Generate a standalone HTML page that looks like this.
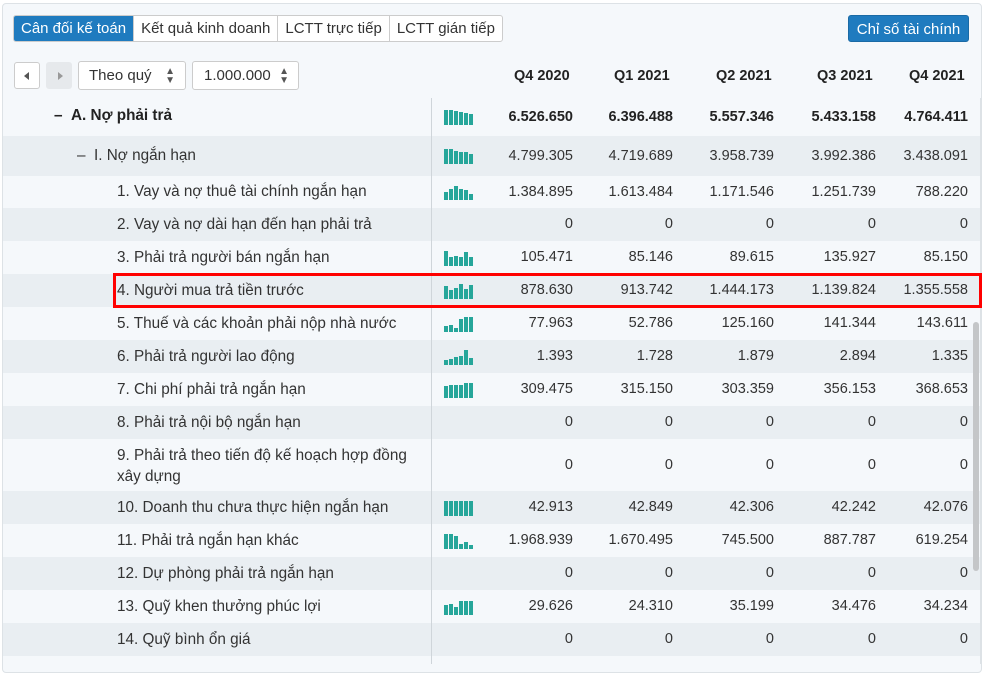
<!DOCTYPE html>
<html><head><meta charset="utf-8"><style>
*{box-sizing:border-box;margin:0;padding:0}
body{width:986px;height:664px;overflow:hidden;background:#fff;font-family:"Liberation Sans",Arial,sans-serif;font-size:14.5px;color:#333;position:relative}
.wrap{position:absolute;left:2px;top:3px;width:980px;height:670px;border:1px solid #dde2e6;border-radius:4px;background:#f5f8fb}
.tabs{position:absolute;left:13px;top:15px;display:flex;height:27px;border:1px solid #ccc;border-radius:3px;overflow:hidden;background:#fff}
.tabs div{padding:0 7px;line-height:25px;border-left:1px solid #ccc;color:#333;font-size:15px}
.tabs div:first-child{border-left:none;background:#1f7bbf;color:#fff}
.cs{position:absolute;left:848px;top:15px;width:121px;height:27px;background:#1f7bbf;color:#fff;border-radius:3px;line-height:27px;text-align:center;font-size:15px;border:1px solid #1a6aa5}
.btn{position:absolute;top:61px;height:29px;border:1px solid #ccc;border-radius:3px;background:#fff;font-size:15px;line-height:27px}
.tri{position:absolute;top:11px;width:0;height:0;border-top:4px solid transparent;border-bottom:4px solid transparent}
.hdr{position:absolute;top:68px;font-weight:bold;font-size:14.5px;color:#222}
.row{position:absolute;left:3px;width:977px}
.row .l{position:absolute;white-space:nowrap;font-size:15.3px;margin-left:-3px}
.row .n{position:absolute;text-align:right;width:100px;margin-left:-3px}
.vl{position:absolute;left:431px;top:98px;width:1px;height:566px;background:#cfd5da}
svg{position:absolute;left:441px}
</style></head><body>
<div class="wrap"></div>
<div class="tabs"><div>Cân đối kế toán</div><div>Kết quả kinh doanh</div><div>LCTT trực tiếp</div><div>LCTT gián tiếp</div></div>
<div class="cs">Chỉ số tài chính</div>
<div class="btn" style="left:14px;width:26px;height:27px;top:62px"><div class="tri" style="left:9px;top:9px;border-right:5px solid #555"></div></div>
<div class="btn" style="left:46px;width:26px;height:27px;top:62px;background:#e6e9ec;border-color:#e6e9ec"><div class="tri" style="left:11px;top:9px;border-left:5px solid #999"></div></div>
<div class="btn" style="left:78px;width:108px;padding-left:10px">Theo quý<span style="position:absolute;right:10px;top:0;font-size:10px;line-height:9px;padding-top:5px;color:#555">▲<br>▼</span></div>
<div class="btn" style="left:192px;width:107px;padding-left:11px">1.000.000<span style="position:absolute;right:9px;top:0;font-size:10px;line-height:9px;padding-top:5px;color:#555">▲<br>▼</span></div>
<div class="hdr" style="left:514px">Q4 2020</div>
<div class="hdr" style="left:614px">Q1 2021</div>
<div class="hdr" style="left:716px">Q2 2021</div>
<div class="hdr" style="left:817px">Q3 2021</div>
<div class="hdr" style="left:909px">Q4 2021</div>

<div class="row" style="top:98px;height:38px;background:#f5f8fb;font-weight:bold;color:#222"><span class="l" style="left:54px;top:9px">–&nbsp;&nbsp;A. Nợ phải trả</span>
<svg style="top:12px" width="29" height="15"><g fill="#26a69a"><rect x="0" y="0" width="4" height="15"/><rect x="5" y="0" width="4" height="15"/><rect x="10" y="1" width="4" height="14"/><rect x="15" y="2" width="4" height="13"/><rect x="20" y="3" width="4" height="12"/><rect x="25" y="4" width="4" height="11"/></g></svg>
<span class="n" style="left:473px;top:11px">6.526.650</span><span class="n" style="left:573px;top:11px">6.396.488</span><span class="n" style="left:674px;top:11px">5.557.346</span><span class="n" style="left:776px;top:11px">5.433.158</span><span class="n" style="left:868px;top:11px">4.764.411</span></div>

<div class="row" style="top:136px;height:40px;background:#e9eef2"><span class="l" style="left:77px;top:11px">–&nbsp;&nbsp;I. Nợ ngắn hạn</span>
<svg style="top:13px" width="29" height="15"><g fill="#26a69a"><rect x="0" y="0" width="4" height="15"/><rect x="5" y="0" width="4" height="15"/><rect x="10" y="2" width="4" height="13"/><rect x="15" y="3" width="4" height="12"/><rect x="20" y="3" width="4" height="12"/><rect x="25" y="5" width="4" height="10"/></g></svg>
<span class="n" style="left:473px;top:12px">4.799.305</span><span class="n" style="left:573px;top:12px">4.719.689</span><span class="n" style="left:674px;top:12px">3.958.739</span><span class="n" style="left:776px;top:12px">3.992.386</span><span class="n" style="left:868px;top:12px">3.438.091</span></div>

<div class="row" style="top:176px;height:32px;background:#f5f8fb"><span class="l" style="left:117px;top:7px">1. Vay và nợ thuê tài chính ngắn hạn</span>
<svg style="top:9px" width="29" height="15"><g fill="#26a69a"><rect x="0" y="7" width="4" height="8"/><rect x="5" y="4" width="4" height="11"/><rect x="10" y="1" width="4" height="14"/><rect x="15" y="4" width="4" height="11"/><rect x="20" y="5" width="4" height="10"/><rect x="25" y="9" width="4" height="6"/></g></svg>
<span class="n" style="left:473px;top:8px">1.384.895</span><span class="n" style="left:573px;top:8px">1.613.484</span><span class="n" style="left:674px;top:8px">1.171.546</span><span class="n" style="left:776px;top:8px">1.251.739</span><span class="n" style="left:868px;top:8px">788.220</span></div>

<div class="row" style="top:208px;height:33px;background:#e9eef2"><span class="l" style="left:117px;top:8px">2. Vay và nợ dài hạn đến hạn phải trả</span>
<span class="n" style="left:473px;top:8px">0</span><span class="n" style="left:573px;top:8px">0</span><span class="n" style="left:674px;top:8px">0</span><span class="n" style="left:776px;top:8px">0</span><span class="n" style="left:868px;top:8px">0</span></div>

<div class="row" style="top:241px;height:33px;background:#f5f8fb"><span class="l" style="left:117px;top:8px">3. Phải trả người bán ngắn hạn</span>
<svg style="top:10px" width="29" height="15"><g fill="#26a69a"><rect x="0" y="0" width="4" height="15"/><rect x="5" y="6" width="4" height="9"/><rect x="10" y="5" width="4" height="10"/><rect x="15" y="6" width="4" height="9"/><rect x="20" y="1" width="4" height="14"/><rect x="25" y="6" width="4" height="9"/></g></svg>
<span class="n" style="left:473px;top:8px">105.471</span><span class="n" style="left:573px;top:8px">85.146</span><span class="n" style="left:674px;top:8px">89.615</span><span class="n" style="left:776px;top:8px">135.927</span><span class="n" style="left:868px;top:8px">85.150</span></div>

<div class="row" style="top:274px;height:33px;background:#e9eef2"><span class="l" style="left:117px;top:8px">4. Người mua trả tiền trước</span>
<svg style="top:10px" width="29" height="15"><g fill="#26a69a"><rect x="0" y="2" width="4" height="13"/><rect x="5" y="6" width="4" height="9"/><rect x="10" y="4" width="4" height="11"/><rect x="15" y="0" width="4" height="15"/><rect x="20" y="5" width="4" height="10"/><rect x="25" y="1" width="4" height="14"/></g></svg>
<span class="n" style="left:473px;top:8px">878.630</span><span class="n" style="left:573px;top:8px">913.742</span><span class="n" style="left:674px;top:8px">1.444.173</span><span class="n" style="left:776px;top:8px">1.139.824</span><span class="n" style="left:868px;top:8px">1.355.558</span></div>

<div class="row" style="top:307px;height:33px;background:#f5f8fb"><span class="l" style="left:117px;top:8px">5. Thuế và các khoản phải nộp nhà nước</span>
<svg style="top:10px" width="29" height="15"><g fill="#26a69a"><rect x="0" y="9" width="4" height="6"/><rect x="5" y="8" width="4" height="7"/><rect x="10" y="11" width="4" height="4"/><rect x="15" y="2" width="4" height="13"/><rect x="20" y="0" width="4" height="15"/><rect x="25" y="0" width="4" height="15"/></g></svg>
<span class="n" style="left:473px;top:8px">77.963</span><span class="n" style="left:573px;top:8px">52.786</span><span class="n" style="left:674px;top:8px">125.160</span><span class="n" style="left:776px;top:8px">141.344</span><span class="n" style="left:868px;top:8px">143.611</span></div>

<div class="row" style="top:340px;height:33px;background:#e9eef2"><span class="l" style="left:117px;top:8px">6. Phải trả người lao động</span>
<svg style="top:10px" width="29" height="15"><g fill="#26a69a"><rect x="0" y="10" width="4" height="5"/><rect x="5" y="9" width="4" height="6"/><rect x="10" y="7" width="4" height="8"/><rect x="15" y="6" width="4" height="9"/><rect x="20" y="0" width="4" height="15"/><rect x="25" y="8" width="4" height="7"/></g></svg>
<span class="n" style="left:473px;top:8px">1.393</span><span class="n" style="left:573px;top:8px">1.728</span><span class="n" style="left:674px;top:8px">1.879</span><span class="n" style="left:776px;top:8px">2.894</span><span class="n" style="left:868px;top:8px">1.335</span></div>

<div class="row" style="top:373px;height:33px;background:#f5f8fb"><span class="l" style="left:117px;top:8px">7. Chi phí phải trả ngắn hạn</span>
<svg style="top:10px" width="29" height="15"><g fill="#26a69a"><rect x="0" y="3" width="4" height="12"/><rect x="5" y="2" width="4" height="13"/><rect x="10" y="2" width="4" height="13"/><rect x="15" y="2" width="4" height="13"/><rect x="20" y="0" width="4" height="15"/><rect x="25" y="0" width="4" height="15"/></g></svg>
<span class="n" style="left:473px;top:8px">309.475</span><span class="n" style="left:573px;top:8px">315.150</span><span class="n" style="left:674px;top:8px">303.359</span><span class="n" style="left:776px;top:8px">356.153</span><span class="n" style="left:868px;top:8px">368.653</span></div>

<div class="row" style="top:406px;height:33px;background:#e9eef2"><span class="l" style="left:117px;top:8px">8. Phải trả nội bộ ngắn hạn</span>
<span class="n" style="left:473px;top:8px">0</span><span class="n" style="left:573px;top:8px">0</span><span class="n" style="left:674px;top:8px">0</span><span class="n" style="left:776px;top:8px">0</span><span class="n" style="left:868px;top:8px">0</span></div>

<div class="row" style="top:439px;height:52px;background:#f5f8fb"><span class="l" style="left:117px;top:6px;line-height:21px">9. Phải trả theo tiến độ kế hoạch hợp đồng<br>xây dựng</span>
<span class="n" style="left:473px;top:18px">0</span><span class="n" style="left:573px;top:18px">0</span><span class="n" style="left:674px;top:18px">0</span><span class="n" style="left:776px;top:18px">0</span><span class="n" style="left:868px;top:18px">0</span></div>

<div class="row" style="top:491px;height:33px;background:#e9eef2"><span class="l" style="left:117px;top:8px">10. Doanh thu chưa thực hiện ngắn hạn</span>
<svg style="top:10px" width="29" height="15"><g fill="#26a69a"><rect x="0" y="0" width="4" height="15"/><rect x="5" y="0" width="4" height="15"/><rect x="10" y="0" width="4" height="15"/><rect x="15" y="0" width="4" height="15"/><rect x="20" y="0" width="4" height="15"/><rect x="25" y="0" width="4" height="15"/></g></svg>
<span class="n" style="left:473px;top:8px">42.913</span><span class="n" style="left:573px;top:8px">42.849</span><span class="n" style="left:674px;top:8px">42.306</span><span class="n" style="left:776px;top:8px">42.242</span><span class="n" style="left:868px;top:8px">42.076</span></div>

<div class="row" style="top:524px;height:33px;background:#f5f8fb"><span class="l" style="left:117px;top:8px">11. Phải trả ngắn hạn khác</span>
<svg style="top:10px" width="29" height="15"><g fill="#26a69a"><rect x="0" y="0" width="4" height="15"/><rect x="5" y="0" width="4" height="15"/><rect x="10" y="2" width="4" height="13"/><rect x="15" y="10" width="4" height="5"/><rect x="20" y="8" width="4" height="7"/><rect x="25" y="11" width="4" height="4"/></g></svg>
<span class="n" style="left:473px;top:8px">1.968.939</span><span class="n" style="left:573px;top:8px">1.670.495</span><span class="n" style="left:674px;top:8px">745.500</span><span class="n" style="left:776px;top:8px">887.787</span><span class="n" style="left:868px;top:8px">619.254</span></div>

<div class="row" style="top:557px;height:33px;background:#e9eef2"><span class="l" style="left:117px;top:8px">12. Dự phòng phải trả ngắn hạn</span>
<span class="n" style="left:473px;top:8px">0</span><span class="n" style="left:573px;top:8px">0</span><span class="n" style="left:674px;top:8px">0</span><span class="n" style="left:776px;top:8px">0</span><span class="n" style="left:868px;top:8px">0</span></div>

<div class="row" style="top:590px;height:33px;background:#f5f8fb"><span class="l" style="left:117px;top:8px">13. Quỹ khen thưởng phúc lợi</span>
<svg style="top:10px" width="29" height="15"><g fill="#26a69a"><rect x="0" y="5" width="4" height="10"/><rect x="5" y="4" width="4" height="11"/><rect x="10" y="7" width="4" height="8"/><rect x="15" y="1" width="4" height="14"/><rect x="20" y="1" width="4" height="14"/><rect x="25" y="1" width="4" height="14"/></g></svg>
<span class="n" style="left:473px;top:8px">29.626</span><span class="n" style="left:573px;top:8px">24.310</span><span class="n" style="left:674px;top:8px">35.199</span><span class="n" style="left:776px;top:8px">34.476</span><span class="n" style="left:868px;top:8px">34.234</span></div>

<div class="row" style="top:623px;height:33px;background:#e9eef2"><span class="l" style="left:117px;top:8px">14. Quỹ bình ổn giá</span>
<span class="n" style="left:473px;top:8px">0</span><span class="n" style="left:573px;top:8px">0</span><span class="n" style="left:674px;top:8px">0</span><span class="n" style="left:776px;top:8px">0</span><span class="n" style="left:868px;top:8px">0</span></div>
<div class="row" style="top:656px;height:10px;background:#f5f8fb"></div>

<div class="vl"></div>
<div style="position:absolute;left:980px;top:98px;width:2px;height:566px;background:#dde2e6"></div>
<div style="position:absolute;left:973px;top:322px;width:6px;height:249px;background:#c4c6c8;border-radius:3px"></div>
<div style="position:absolute;left:113px;top:273px;width:869px;height:35px;border:3px solid #f00"></div>
</body></html>
